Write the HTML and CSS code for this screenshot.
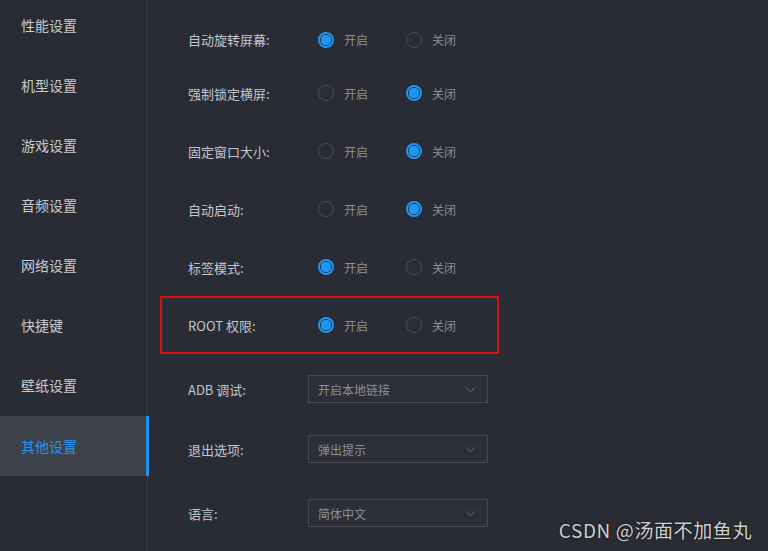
FILE: index.html
```html
<!DOCTYPE html>
<html lang="zh-CN">
<head>
  <meta charset="UTF-8">
  <title>设置</title>
  <link rel="stylesheet" href="styles.css">
</head>
<body>

  <!-- Menú lateral -->
  <div class="menu">
    <div class="item">性能设置</div>
    <div class="item">机型设置</div>
    <div class="item">游戏设置</div>
    <div class="item">音频设置</div>
    <div class="item">网络设置</div>
    <div class="item">快捷键</div>
    <div class="item">壁纸设置</div>
    <div class="item active">其他设置</div>
  </div>

  <!-- Opciones -->
  <div class="panel">
    <div class="fila primera">
      <span class="etiqueta">自动旋转屏幕:</span>
      <span class="opcion"><i class="radio on"></i>开启</span>
      <span class="opcion"><i class="radio"></i>关闭</span>
    </div>
    <div class="fila">
      <span class="etiqueta">强制锁定横屏:</span>
      <span class="opcion"><i class="radio"></i>开启</span>
      <span class="opcion"><i class="radio on"></i>关闭</span>
    </div>
    <div class="fila">
      <span class="etiqueta">固定窗口大小:</span>
      <span class="opcion"><i class="radio"></i>开启</span>
      <span class="opcion"><i class="radio on"></i>关闭</span>
    </div>
    <div class="fila">
      <span class="etiqueta">自动启动:</span>
      <span class="opcion"><i class="radio"></i>开启</span>
      <span class="opcion"><i class="radio on"></i>关闭</span>
    </div>
    <div class="fila">
      <span class="etiqueta">标签模式:</span>
      <span class="opcion"><i class="radio on"></i>开启</span>
      <span class="opcion"><i class="radio"></i>关闭</span>
    </div>
    <div class="fila marcada">
      <span class="etiqueta">ROOT 权限:</span>
      <span class="opcion"><i class="radio on"></i>开启</span>
      <span class="opcion"><i class="radio"></i>关闭</span>
    </div>

    <div class="fila combo adb">
      <span class="etiqueta corta">ADB 调试:</span>
      <div class="select">开启本地链接<svg viewBox="0 0 12 7"><path d="M1 1l5 5 5-5" /></svg></div>
    </div>
    <div class="fila combo">
      <span class="etiqueta corta">退出选项:</span>
      <div class="select">弹出提示<svg viewBox="0 0 12 7"><path d="M1 1l5 5 5-5" /></svg></div>
    </div>
    <div class="fila combo idioma">
      <span class="etiqueta corta">语言:</span>
      <div class="select">简体中文<svg viewBox="0 0 12 7"><path d="M1 1l5 5 5-5" /></svg></div>
    </div>
  </div>

  <div class="marca">CSDN @汤面不加鱼丸</div>

</body>
</html>
```

FILE: styles.css
```css
/* Estilos generales */
html, body {
  margin: 0;
  padding: 0;
  height: 100%;
  overflow: hidden;
}

body {
  display: flex;
  background-color: #292c34;
  font-family: "Noto Sans CJK SC", "Noto Sans", sans-serif;
  color: #c3c6cc;
  position: relative;
}

/* Menú lateral */
.menu {
  width: 147px;
  flex-shrink: 0;
  border-right: 1px solid #363940;
  margin-top: -5px;
}

.item {
  position: relative;
  height: 60px;
  line-height: 60px;
  padding-left: 21px;
  font-size: 14px;
  color: #c8cbd0;
}

.item.active {
  background-color: #3e424b;
  color: #2196f3;
  margin-top: 1px;
}

.item.active::after {
  content: "";
  position: absolute;
  top: 0;
  right: -2px;
  width: 3px;
  height: 100%;
  background-color: #1e94f0;
}

/* Panel de opciones */
.panel {
  padding-left: 40px;
  padding-top: 15px;
}

.fila {
  display: flex;
  align-items: center;
  height: 58px;
  font-size: 13px;
}

.fila.primera {
  height: 49px;
}

.etiqueta {
  width: 130px;
  color: #c3c6cc;
}

.etiqueta.corta {
  width: 120px;
}

.opcion {
  display: flex;
  align-items: center;
  width: 88px;
  font-size: 12px;
  color: #8c8f96;
}

.radio {
  width: 14px;
  height: 14px;
  border: 1px solid #4a4d55;
  border-radius: 50%;
  margin-right: 10px;
  box-sizing: content-box;
}

.radio.on {
  border: 2px solid #1f97f2;
  width: 12px;
  height: 12px;
  background: radial-gradient(circle, #1f97f2 0 5px, #292c34 5.5px);
}

/* Fila marcada en rojo */
.fila.marcada {
  margin-left: -28px;
  padding-left: 26px;
  width: 309px;
  height: 54px;
  border: 2px solid #e00d0d;
}

/* Desplegables */
.fila.combo {
  height: 60px;
}

.fila.adb {
  margin-top: 5px;
}

.fila.idioma {
  margin-top: 4px;
}

.select {
  display: flex;
  align-items: center;
  justify-content: space-between;
  width: 158px;
  height: 26px;
  padding: 0 11px 0 9px;
  border: 1px solid #45484f;
  background-color: #2c2f37;
  font-size: 12px;
  color: #8c8f96;
}

.select svg {
  width: 11px;
  height: 7px;
  fill: none;
  stroke: #6e7178;
  stroke-width: 1;
}

/* Marca de agua */
.marca {
  position: absolute;
  right: 16px;
  bottom: 8px;
  font-size: 19px;
  letter-spacing: 0.6px;
  color: #d0d0d0;
  text-shadow: 0 0 2px #000;
}
```
